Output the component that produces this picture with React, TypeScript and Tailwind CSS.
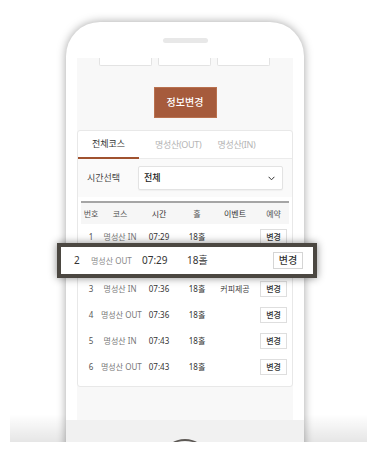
import React from "react";

const rows = [
  { no: 1, course: "명성산 IN", time: "07:29", hole: "18홀", event: "" },
  { no: 2, course: "명성산 OUT", time: "07:29", hole: "18홀", event: "" },
  { no: 3, course: "명성산 IN", time: "07:36", hole: "18홀", event: "커피제공" },
  { no: 4, course: "명성산 OUT", time: "07:36", hole: "18홀", event: "" },
  { no: 5, course: "명성산 IN", time: "07:43", hole: "18홀", event: "" },
  { no: 6, course: "명성산 OUT", time: "07:43", hole: "18홀", event: "" },
];

const cols = "grid grid-cols-[20px_38px_40px_36px_40px_37px] items-center text-center";

export default function App() {
  return (
    <div
      className="relative w-[367px] h-[459px] bg-white overflow-hidden"
      style={{ fontFamily: '"Noto Sans", "Noto Sans CJK KR", sans-serif' }}
    >
      {/* phone, clipped at the bottom */}
      <div className="relative h-[442px] overflow-hidden pt-[22px]">
        <div className="absolute left-[10px] right-0 bottom-0 h-[28px] bg-gradient-to-b from-transparent to-black/10" />
        <div className="relative ml-[66px] w-[238px] h-[440px] rounded-t-[34px] bg-white shadow-[0_0_10px_rgba(0,0,0,0.36)] flex flex-col">
          {/* top bezel */}
          <div className="h-[36px] flex justify-center pt-[16px] shrink-0">
            <div className="w-[45px] h-[5px] rounded-full bg-[#e8e8e8]" />
          </div>

          {/* screen */}
          <div className="mx-[11px] h-[362px] bg-[#f8f8f8] flex flex-col shrink-0">
            <div className="flex justify-center gap-[6px] -ml-[1px]">
              {[0, 1, 2].map((i) => (
                <div key={i} className="w-[53px] h-[8px] bg-white border border-t-0 border-[#e3e3e3] rounded-b-[2px]" />
              ))}
            </div>

            <div className="flex justify-center mt-[21px]">
              <button className="w-[63px] h-[31px] bg-[#a65b3c] border border-[#b9714f] text-white text-[10px] font-medium">
                정보변경
              </button>
            </div>

            {/* card */}
            <div className="mt-[12px] bg-white border border-[#e8e8e8] rounded-[3px] pb-[6px]">
              <div className="flex items-center h-[28px] border-b border-[#ebebeb] text-[9px]">
                <div className="w-[61px] h-full flex items-center justify-center text-[#333] border-b-2 border-[#a0522f] -mb-[1px]">
                  전체코스
                </div>
                <div className="ml-[16px] text-[#b5b5b5] tracking-[-0.3px]">명성산(OUT)</div>
                <div className="ml-[16px] text-[#b5b5b5] tracking-[-0.3px]">명성산(IN)</div>
              </div>

              <div className="flex items-center h-[38px] bg-[#fafafa]">
                <div className="w-[60px] pl-[9px] text-[9px] text-[#444]">시간선택</div>
                <div className="w-[145px] h-[24px] bg-white border border-[#e3e3e3] rounded-[2px] shadow-[0_1px_1px_rgba(0,0,0,0.04)] flex items-center justify-between pl-[5px] pr-[7px]">
                  <span className="text-[9px] text-[#222] font-medium">전체</span>
                  <svg width="7" height="5" viewBox="0 0 7 5" fill="none">
                    <path d="M0.6 0.8 L3.5 3.8 L6.4 0.8" stroke="#333" strokeWidth="1" />
                  </svg>
                </div>
              </div>

              <div className="mx-[3px] mt-[4px]">
                <div className={`${cols} h-[23px] border-t-2 border-[#a5a5a5] bg-[#f6f6f6] text-[8px] text-[#555]`}>
                  <span>번호</span>
                  <span>코스</span>
                  <span className="text-[#333]">시간</span>
                  <span>홀</span>
                  <span className="text-[#333]">이벤트</span>
                  <span>예약</span>
                </div>
                {rows.map((r) => (
                  // row 2 is shown enlarged in the callout below
                  <div key={r.no} className={`${cols} h-[26px] text-[8px] ${r.no === 2 ? "invisible" : ""}`}>
                    <span className="text-[#555]">{r.no}</span>
                    <span className="text-[#777] whitespace-nowrap">{r.course}</span>
                    <span className="text-[#333]">{r.time}</span>
                    <span className="text-[#333]">{r.hole}</span>
                    <span className="text-[#444] whitespace-nowrap">{r.event}</span>
                    <span className="flex justify-center">
                      <span className="w-[27px] h-[16px] bg-white border border-[#dedede] flex items-center justify-center text-[#333] font-medium">
                        변경
                      </span>
                    </span>
                  </div>
                ))}
              </div>
            </div>
          </div>

          {/* bottom bezel */}
          <div className="flex-1 bg-[#f1f1f1] flex justify-center pt-[19px]">
            <div className="w-[40px] h-[30px] rounded-[50%] border-t-2 border-[#5d5955]" />
          </div>
        </div>
      </div>

      {/* highlighted row */}
      <div className="absolute left-[57px] top-[243px] w-[260px] h-[35px] bg-white border-[4px] border-[#4b4741] shadow-[0_0_8px_rgba(0,0,0,0.45)] flex items-center pl-[13px] pr-[10px]">
        <span className="w-[17px] text-[10px] text-[#333]">2</span>
        <span className="w-[51px] text-[8px] text-[#888] whitespace-nowrap">명성산 OUT</span>
        <span className="w-[45px] text-[10px] text-[#333]">07:29</span>
        <span className="text-[10px] text-[#333]">18홀</span>
        <span className="ml-auto w-[30px] h-[17px] border border-[#d5d5d5] flex items-center justify-center text-[10px] text-[#333] font-medium">
          변경
        </span>
      </div>
    </div>
  );
}
